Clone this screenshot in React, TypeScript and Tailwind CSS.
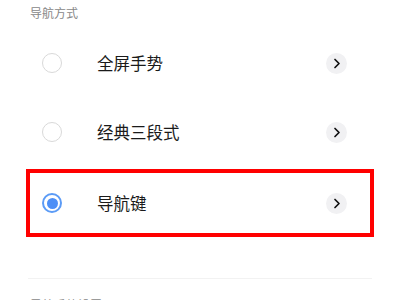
import React from 'react';

const options = ['全屏手势', '经典三段式', '导航键'];

const Chevron = () => (
  <div className="w-[21px] h-[21px] rounded-full bg-[#f1f1f3] flex items-center justify-center">
    <svg width="8" height="11" viewBox="0 0 8 11" fill="none">
      <polyline points="2,1.5 6,5.5 2,9.5" stroke="#111" strokeWidth="1.7" strokeLinecap="round" strokeLinejoin="round" />
    </svg>
  </div>
);

const Radio = ({ checked }: { checked: boolean }) =>
  checked ? (
    <div className="w-[20px] h-[20px] rounded-full border-2 border-[#5b9bf6] flex items-center justify-center">
      <div className="w-[11px] h-[11px] rounded-full bg-[#4d8ff6]" />
    </div>
  ) : (
    <div className="w-[20px] h-[20px] rounded-full border-[1.5px] border-[#d9d9d9]" />
  );

const App = () => {
  const selected = 2;

  return (
    <div
      className="w-[400px] h-[300px] overflow-hidden bg-white"
      style={{ fontFamily: '"Noto Sans CJK SC", "Noto Sans", sans-serif' }}
    >
      <div className="h-[29px] pl-[30px] pt-[5px] text-[12px] leading-[16px] text-[#888]">导航方式</div>

      <div className="px-[26px] flex flex-col">
        {options.map((label, i) => {
          const isSel = i === selected;
          return (
            <div
              key={label}
              className={`h-[68px] flex items-center ${
                isSel
                  ? 'mt-[3px] border-4 border-[#ff0000] pl-[12px] pr-[23px]'
                  : i === 0
                  ? 'pl-[16px] pr-[27px]'
                  : 'mt-[1px] pl-[16px] pr-[27px]'
              }`}
            >
              <Radio checked={isSel} />
              <span className="ml-[35px] flex-1 text-[16.5px] text-[#1a1a1a]">{label}</span>
              <Chevron />
            </div>
          );
        })}
      </div>

      <div className="mt-[41px] mx-[28px] h-px bg-[#f2f2f2]" />
      <div className="pl-[30px] pt-[18px] text-[12px] leading-[16px] text-[#888]">导航手势设置</div>
    </div>
  );
};

export default App;
